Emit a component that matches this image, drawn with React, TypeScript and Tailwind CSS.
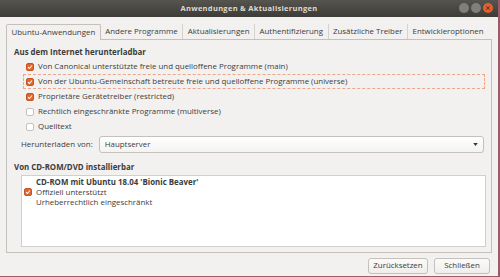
import React from 'react';

const font = { fontFamily: '"Open Sans", "Noto Sans", sans-serif' };

const Check = ({ checked }: { checked?: boolean }) =>
  checked ? (
    <span className="w-[8px] h-[8px] rounded-[2px] bg-[#e0662f] border border-[#c9541f] flex items-center justify-center shrink-0">
      <svg viewBox="0 0 8 8" className="w-[6px] h-[6px]">
        <path d="M1.3 4.2 L3.2 6 L6.7 2" stroke="#fff" strokeWidth="1.4" fill="none" />
      </svg>
    </span>
  ) : (
    <span className="w-[8px] h-[8px] rounded-[2px] bg-white border border-[#c4c2bd] shrink-0" />
  );

const Row = ({ checked, label, focus }: { checked?: boolean; label: string; focus?: boolean }) => (
  <div
    className={`flex items-center gap-[4px] h-[15px] pl-[2px] ml-[16px] mr-[6px] ${
      focus ? 'border border-dashed border-[#eba68c]' : 'border border-transparent'
    }`}
  >
    <Check checked={checked} />
    <span>{label}</span>
  </div>
);

const tabs = ['Andere Programme', 'Aktualisierungen', 'Authentifizierung', 'Zusätzliche Treiber', 'Entwickleroptionen'];

export default function App() {
  return (
    <div
      className="w-[500px] h-[277px] bg-[#f2f1f0] flex flex-col text-[7.9px] text-[#3c3c3c] border-r-2 border-b border-[#9c5a6c] overflow-hidden"
      style={font}
    >
      {/* title bar */}
      <div className="h-[17px] shrink-0 bg-gradient-to-b from-[#55544f] to-[#3d3c38] flex items-center relative">
        <div className="flex-1 text-center font-bold text-[#dfdbd2] tracking-[0.3px] text-[7.5px]">
          Anwendungen &amp; Aktualisierungen
        </div>
        <div className="absolute right-[5px] top-[3px] flex gap-[2px]">
          <span className="w-[10px] h-[10px] rounded-full bg-[#807f7a]" />
          <span className="w-[10px] h-[10px] rounded-full bg-[#807f7a]" />
          <span className="w-[10px] h-[10px] rounded-full bg-[#e2602f] flex items-center justify-center">
            <svg viewBox="0 0 10 10" className="w-[6px] h-[6px]">
              <path d="M2 2 L8 8 M8 2 L2 8" stroke="#4a2a1a" strokeWidth="1.4" />
            </svg>
          </span>
        </div>
      </div>

      {/* tabs */}
      <div className="mt-[6px] mx-[6px] flex items-end h-[16px]">
        <div className="h-[16px] px-[4.5px] flex items-center border border-b-0 border-[#c4c1bc] bg-[#f2f1f0] rounded-t-[2px] relative z-10 -mb-px">
          Ubuntu-Anwendungen
        </div>
        {tabs.map((t) => (
          <div key={t} className="h-[15px] px-[4.5px] flex items-center border-r border-[#d6d3cf] last:border-r-0">
            {t}
          </div>
        ))}
      </div>

      {/* panel */}
      <div className="ml-[6px] w-[486px] h-[214px] border border-[#c4c1bc] flex flex-col">
        <div className="font-bold pl-[7px] mt-[6px] h-[13px] flex items-center">Aus dem Internet herunterladbar</div>
        <Row checked label="Von Canonical unterstützte freie und quelloffene Programme (main)" />
        <Row checked focus label="Von der Ubuntu-Gemeinschaft betreute freie und quelloffene Programme (universe)" />
        <Row checked label="Proprietäre Gerätetreiber (restricted)" />
        <Row label="Rechtlich eingeschränkte Programme (multiverse)" />
        <Row label="Quelltext" />
        <div className="flex items-center mt-[2px] ml-[14px] mr-[7px] gap-[6px]">
          <span>Herunterladen von:</span>
          <div className="flex-1 h-[17px] bg-gradient-to-b from-white to-[#f3f3f2] border border-[#c4c1bc] rounded-[3px] flex items-center justify-between px-[5px]">
            <span>Hauptserver</span>
            <svg viewBox="0 0 6 4" className="w-[5px] h-[3px]">
              <path d="M0 0 L6 0 L3 4 Z" fill="#333" />
            </svg>
          </div>
        </div>
        <div className="font-bold pl-[7px] mt-[8px] h-[13px] flex items-center">Von CD-ROM/DVD installierbar</div>
        <div className="ml-[14px] mr-[5px] mt-[1px] h-[72px] bg-white border border-[#d2d0cc] flex flex-col pt-[1px]">
          <div className="flex items-start gap-[4px] pl-[2px]">
            <div className="mt-[11px]">
              <Check checked />
            </div>
            <div className="leading-[10px]">
              <div className="font-bold">CD-ROM mit Ubuntu 18.04 'Bionic Beaver'</div>
              <div>Offiziell unterstützt</div>
              <div>Urheberrechtlich eingeschränkt</div>
            </div>
          </div>
        </div>
      </div>

      {/* buttons */}
      <div className="flex justify-end gap-[6px] mt-[5px] mr-[8px]">
        <button className="h-[16px] w-[60px] border border-[#c4c1bc] rounded-[3px] bg-gradient-to-b from-[#fbfbfa] to-[#efeeed] text-[#3c3c3c]">
          Zurücksetzen
        </button>
        <button className="h-[16px] w-[56px] border border-[#c4c1bc] rounded-[3px] bg-gradient-to-b from-[#fbfbfa] to-[#efeeed] text-[#3c3c3c]">
          Schließen
        </button>
      </div>
    </div>
  );
}
